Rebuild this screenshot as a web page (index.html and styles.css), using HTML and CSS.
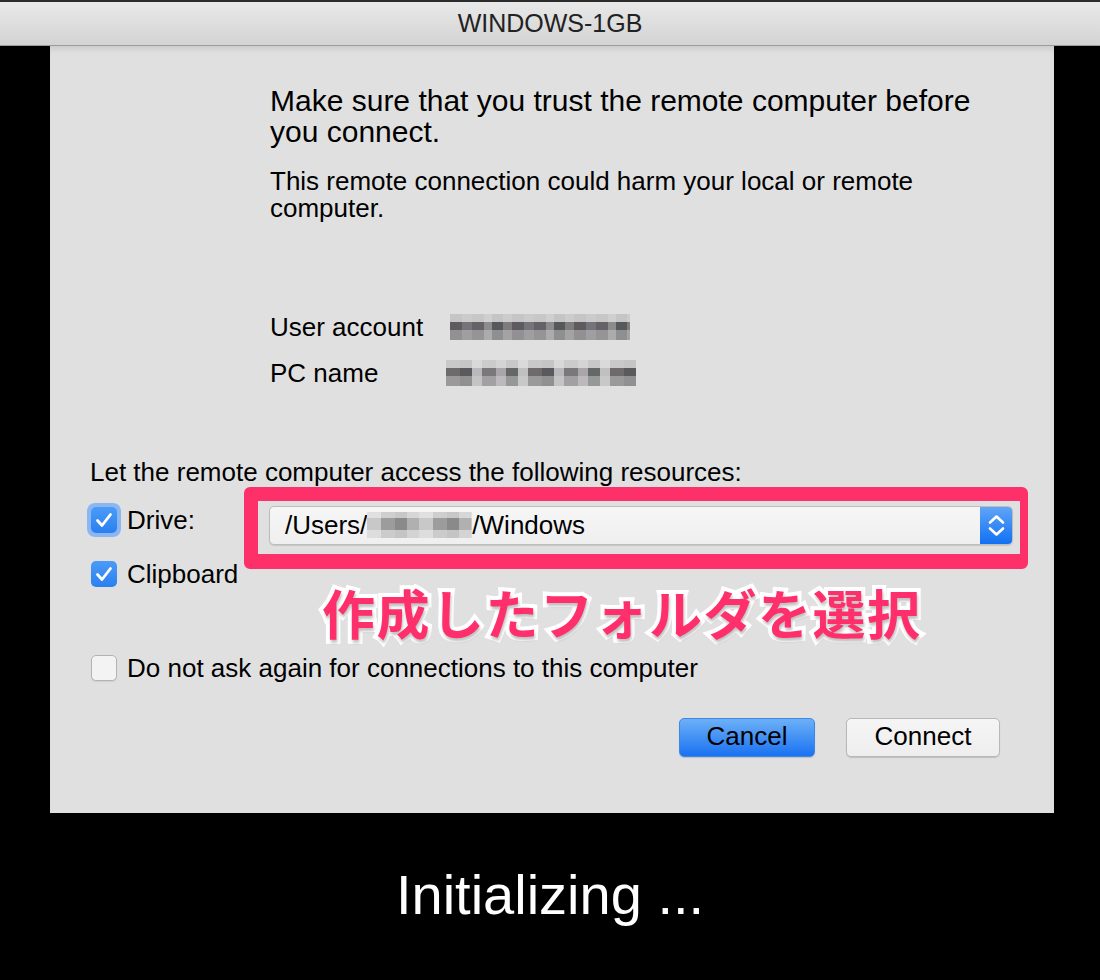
FILE: index.html
```html
<!DOCTYPE html>
<html>
<head>
<meta charset="utf-8">
<link rel="stylesheet" href="styles.css">
</head>
<body>
<div class="titlebar">WINDOWS-1GB</div>
<div class="panel">
  <div class="intro">
    <p class="heading">Make sure that you trust the remote computer before you connect.</p>
    <p class="warning">This remote connection could harm your local or remote computer.</p>
    <div class="info">
      <div class="info-row"><span class="info-label">User account</span><span class="mosaic mosaic-a"></span></div>
      <div class="info-row"><span class="info-label">PC name</span><span class="mosaic mosaic-b"></span></div>
    </div>
  </div>
  <p class="res-title">Let the remote computer access the following resources:</p>
  <div class="resources">
    <div class="res-list">
      <label class="check-row"><span class="ring"><span class="box on"><svg viewBox="0 0 26 26"><path d="M6.5 13.5l4.5 5 8.5-11" fill="none" stroke="#fff" stroke-width="2.8" stroke-linecap="round" stroke-linejoin="round"/></svg></span></span>Drive:</label>
      <label class="check-row"><span class="box on"><svg viewBox="0 0 26 26"><path d="M6.5 13.5l4.5 5 8.5-11" fill="none" stroke="#fff" stroke-width="2.8" stroke-linecap="round" stroke-linejoin="round"/></svg></span>Clipboard</label>
    </div>
    <div class="highlight">
      <div class="popup">
        <span class="path">/Users/<span class="mosaic mosaic-c"></span>/Windows</span>
        <span class="stepper"><svg viewBox="0 0 33 39"><path d="M10 16.5l6.5-6 6.5 6M10 22.5l6.5 6 6.5-6" fill="none" stroke="#fff" stroke-width="2.6" stroke-linecap="round" stroke-linejoin="round"/></svg></span>
      </div>
    </div>
    <div class="annotation">作成したフォルダを選択</div>
  </div>
  <label class="check-row ask"><span class="box off"></span>Do not ask again for connections to this computer</label>
  <div class="buttons">
    <button class="btn primary">Cancel</button>
    <button class="btn">Connect</button>
  </div>
</div>
<div class="status">Initializing ...</div>
</body>
</html>
```
FILE: styles.css
```css
* { box-sizing: border-box; }
html, body { margin: 0; padding: 0; }
body {
  width: 1100px;
  height: 980px;
  background: #000;
  font-family: "Liberation Sans", Arial, sans-serif;
  color: #000;
  overflow: hidden;
}
.titlebar {
  height: 46px;
  border-top: 2px solid #2b2b2b;
  border-bottom: 1px solid #9c9c9c;
  background: linear-gradient(#e9e9e9, #d3d3d3);
  text-align: center;
  font-size: 25px;
  line-height: 43px;
  color: #222;
}
.panel {
  margin-left: 50px;
  width: 1004px;
  height: 767px;
  background: #e0e0e0;
  box-shadow: inset 0 6px 6px -4px rgba(0,0,0,0.12);
  padding: 39px 54px 0 40px;
}
p { margin: 0; }
.intro { margin-left: 180px; }
.heading {
  font-size: 30px;
  line-height: 31px;
  width: 720px;
}
.warning {
  font-size: 26px;
  line-height: 27px;
  margin-top: 21px;
  width: 690px;
}
.info { margin-top: 90px; display: flex; flex-direction: column; gap: 16px; }
.info-row { display: flex; align-items: center; height: 30px; font-size: 26px; }
.info-label { width: 180px; }
.mosaic {
  display: inline-block;
  background:
    linear-gradient(to bottom, rgba(224,224,224,0.8) 0 30%, rgba(0,0,0,0) 30% 62%, rgba(210,210,210,0.45) 62% 100%),
    repeating-linear-gradient(to right, #5e5a5e 0 12px, #75747a 12px 22px, #646167 22px 34px, #8c8c8c 34px 42px, #56585a 42px 53px, #7d7d7d 53px 62px);
}
.mosaic-a { width: 180px; height: 26px; }
.mosaic-b { width: 190px; height: 26px; margin-left: -4px;
  background:
    linear-gradient(to bottom, rgba(224,224,224,0.8) 0 30%, rgba(0,0,0,0) 30% 62%, rgba(210,210,210,0.45) 62% 100%),
    repeating-linear-gradient(to right, #6d6b6b 0 14px, #5a5a5c 14px 26px, #b9b9bb 26px 36px, #7b787b 36px 50px, #a9a5a9 50px 60px, #666868 60px 72px, #c0c0c2 72px 82px);
}
.mosaic-c { width: 105px; height: 26px; vertical-align: -4px;
  background:
    linear-gradient(to bottom, rgba(240,240,240,0.6) 0 25%, rgba(0,0,0,0) 25% 70%, rgba(235,235,235,0.6) 70% 100%),
    repeating-linear-gradient(to right, #c8c8c8 0 14px, #9c9c9c 14px 28px, #8a8a8a 28px 40px, #b0b0b0 40px 52px);
}
.res-title {
  font-size: 26px;
  line-height: 30px;
  margin-top: 69px;
}
.resources { display: flex; position: relative; }
.res-list {
  width: 154px;
  flex: none;
  padding-top: 18px;
  display: flex;
  flex-direction: column;
  gap: 24px;
}
.check-row {
  display: flex;
  align-items: center;
  height: 30px;
  font-size: 26px;
  gap: 10px;
  margin-left: 1px;
}
.box {
  width: 26px;
  height: 26px;
  border-radius: 5px;
  display: inline-flex;
  flex: none;
}
.box svg { width: 26px; height: 26px; }
.box.on { background: linear-gradient(#4b9bf7, #2a80f0); }
.box.off { background: #f3f3f3; border: 1px solid #b3b3b3; box-shadow: 0 1px 1px rgba(0,0,0,0.08); }
.ring {
  display: inline-flex;
  margin: -4px;
  padding: 4px;
  border-radius: 8px;
  background: #8ab7f2;
}
.highlight {
  flex: none;
  width: 784px;
  height: 82px;
  border: 14px solid #fe3069;
  border-right-width: 8px;
  border-bottom-width: 15px;
  border-radius: 6px;
  padding: 5px 7px 9px 11px;
}
.popup {
  height: 39px;
  display: flex;
  align-items: center;
  border: 1px solid #bdbdbd;
  border-radius: 5px;
  background: linear-gradient(#f6f6f6, #efefef);
  box-shadow: 0 1px 1px rgba(0,0,0,0.12);
  overflow: hidden;
}
.path {
  flex: 1;
  font-size: 26px;
  padding-left: 15px;
  white-space: nowrap;
}
.stepper {
  width: 33px;
  height: 39px;
  margin: -1px -1px -1px 0;
  background: linear-gradient(#63a6f7, #0f6ff2);
  display: flex;
}
.stepper svg { width: 33px; height: 39px; }
.annotation {
  position: absolute;
  left: 232px;
  top: 97px;
  font-family: "Noto Sans CJK JP", sans-serif;
  font-weight: 700;
  font-size: 53px;
  line-height: 56px;
  letter-spacing: 1.5px;
  color: #fe2f6b;
  -webkit-text-stroke: 8px #fff;
  paint-order: stroke fill;
  text-shadow: 1px 3px 3px rgba(0,0,0,0.25);
  white-space: nowrap;
}
.ask { margin-top: 64px; }
.buttons {
  display: flex;
  justify-content: flex-end;
  gap: 31px;
  margin-top: 35px;
}
.btn {
  font-family: "Liberation Sans", Arial, sans-serif;
  font-size: 26px;
  height: 39px;
  width: 154px;
  border: 1px solid #b8b8b8;
  border-radius: 5px;
  background: linear-gradient(#f5f5f5, #eeeeee);
  box-shadow: 0 1px 1px rgba(0,0,0,0.15);
  color: #000;
  padding: 0 0 2px;
}
.btn.primary {
  width: 136px;
  border-color: #3f86e9;
  background: linear-gradient(#6cb0f7, #1a72f1);
}
.status {
  color: #fff;
  font-size: 56px;
  line-height: 64px;
  text-align: center;
  margin-top: 50px;
}
```
